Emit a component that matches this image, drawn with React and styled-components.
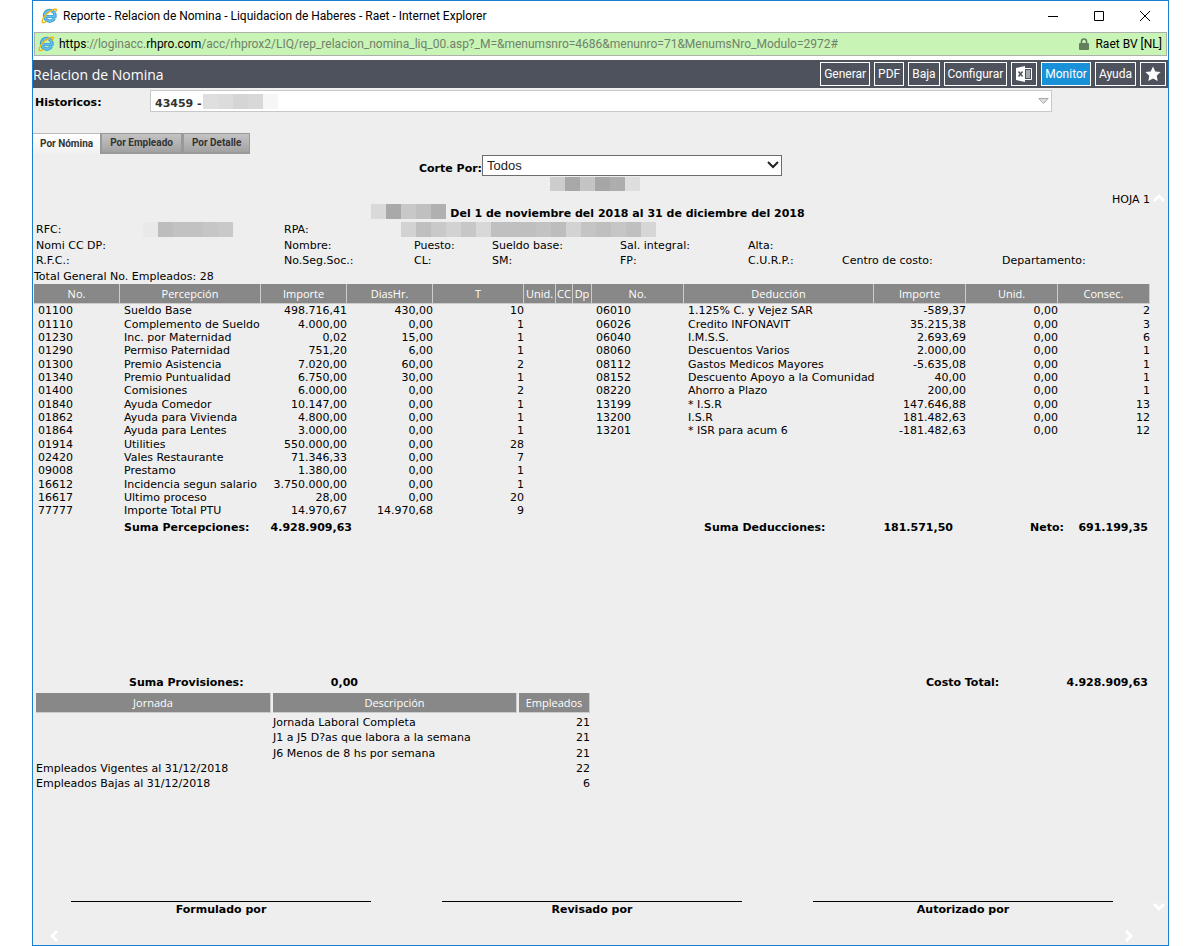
import styled, { createGlobalStyle } from 'styled-components'

const GlobalStyle = createGlobalStyle`
    * {
        box-sizing: border-box;
    }

    body {
        margin: 0;
        background-color: #fff;
        color: #000;
        font-family: 'DejaVu Sans', Verdana, sans-serif;
        font-size: 11px;
    }
`;

const uiFont = `'Open Sans', 'Noto Sans', sans-serif`;
const chromeFont = `Roboto, 'Open Sans', sans-serif`;

const Window = styled.div`
    display: flex;
    flex-direction: column;
    min-height: 100vh;
    margin: 0 31px 0 32px;
    border: 1px solid #1a7fd0;
    background-color: #eee;
`;

const TitleBar = styled.div`
    display: flex;
    align-items: center;
    gap: 5px;
    height: 31px;
    padding: 0 17px 2px 8px;
    background-color: #fff;
    font-family: ${chromeFont};
    font-size: 12px;
`;

const WindowTitle = styled.span`
    flex: 1;
`;

const WindowButtons = styled.div`
    display: flex;
    gap: 34px;
`;

const WindowButton = styled.button`
    display: flex;
    width: 12px;
    height: 12px;
    padding: 0;
    border: none;
    background: none;
`;

const AddressArea = styled.div`
    padding: 0 1px 4px;
    background-color: #fff;
`;

const AddressBar = styled.div`
    display: flex;
    align-items: center;
    gap: 4px;
    height: 24px;
    padding: 0 4px 0 3px;
    border: 1px solid #adb0ab;
    background-color: #c8f4b6;
    font-family: ${chromeFont};
    font-size: 12px;
`;

const Url = styled.span`
    flex: 1;
    color: #71816b;

    b {
        color: #000;
        font-weight: normal;
    }
`;

const Owner = styled.span`
    margin-left: 2px;
`;

const PageHeader = styled.header`
    display: flex;
    align-items: center;
    justify-content: space-between;
    height: 28px;
    padding-right: 2px;
    background-color: #4e525d;
    color: #fff;
`;

const PageTitle = styled.h1`
    margin: 0;
    font-family: ${uiFont};
    font-size: 14px;
    font-weight: normal;
`;

const Toolbar = styled.div`
    display: flex;
    gap: 4px;
`;

const ToolButton = styled.button`
    display: flex;
    align-items: center;
    justify-content: center;
    min-width: 26px;
    height: 24px;
    padding: 0 3px;
    border: 1px solid #fff;
    background-color: ${props => props.$active ? '#1991d8' : '#4e525d'};
    color: #fff;
    font-family: ${chromeFont};
    font-size: 12px;
`;

const HistoryRow = styled.div`
    display: flex;
    align-items: center;
    padding: 2px 116px 0 2px;
    font-weight: bold;

    label {
        width: 115px;
        padding-top: 3px;
    }
`;

const HistoryBox = styled.div`
    position: relative;
    flex: 1;
    height: 22px;

    select {
        width: 100%;
        height: 22px;
        padding: 4px 4px 0;
        border: 1px solid #c8c8c8;
        border-radius: 0;
        appearance: none;
        background-color: #fff;
        color: #333;
        font: bold 11px 'DejaVu Sans', Verdana, sans-serif;
    }

    svg {
        position: absolute;
        top: 8px;
        right: 3px;
    }
`;

const HistoryMask = styled.div`
    position: absolute;
    top: 4px;
    left: 53px;
`;

const MosaicRow = styled.span`
    display: inline-flex;
    height: ${props => props.$height || 15}px;
    vertical-align: top;
`;

const MosaicCell = styled.span`
    width: 15px;
    background-color: ${props => props.$color};
`;

const Tabs = styled.div`
    display: flex;
    margin-top: 21px;
`;

const Tab = styled.button`
    height: 21px;
    padding: 0 8px 2px;
    border: 1px solid #999;
    border-left-width: 2px;
    border-bottom-width: 2px;
    background: linear-gradient(#c4c4c4, #a2a2a2);
    color: #333;
    font-family: ${chromeFont};
    font-size: 10px;
    font-weight: bold;

    ${props => props.$active && `
        padding: 0 7px 2px;
        border: none;
        border-top: 1px solid #bbb;
        background: linear-gradient(#fff, #f0f0f0);
    `}
`;

const CutRow = styled.div`
    display: flex;
    align-items: center;
    justify-content: center;
    margin-top: 1px;

    label {
        padding-top: 5px;
        font-weight: bold;
    }
`;

const CutSelectBox = styled.div`
    position: relative;

    select {
        display: block;
        width: 300px;
        height: 21px;
        padding: 0 4px;
        border: 1px solid #6d6d6d;
        border-radius: 0;
        appearance: none;
        background-color: #fff;
        color: #222;
        font: 13px 'Liberation Sans', Arial, sans-serif;
    }

    svg {
        position: absolute;
        top: 5px;
        right: 3px;
    }
`;

const ReportArea = styled.div`
    display: grid;
    flex: 1;
    grid-template-columns: 1fr 18px;
    grid-template-rows: 1fr 27px;
    margin-top: 1px;
`;

const Report = styled.main`
    display: flex;
    flex-direction: column;
    padding-left: 1px;
`;

const ReportCenter = styled.div`
    height: 15px;
    padding-left: 5px;
    text-align: center;
`;

const Sheet = styled.div`
    height: 12px;
    line-height: 16px;
    text-align: right;
`;

const Period = styled.div`
    display: flex;
    align-items: flex-start;
    justify-content: center;
    gap: 4px;
    height: 15px;
    margin-bottom: 2px;
    padding-right: 8px;
    font-weight: bold;
    line-height: 15px;

    strong {
        padding-top: 2px;
    }
`;

const Info = styled.div`
    display: grid;
    grid-template-columns: 248fr 130fr 78fr 128fr 128fr 94fr 160fr 148fr;
    grid-template-rows: 16px 16px 15px;
    align-items: center;
    padding-left: 2px;
`;

const InfoField = styled.span`
    grid-column: ${props => props.$column};
    grid-row: ${props => props.$row};
    white-space: nowrap;
`;

const RfcField = styled(InfoField)`
    display: flex;
    align-items: center;
    gap: 82px;
`;

const RpaField = styled(InfoField)`
    display: flex;
    align-items: center;
    gap: 92px;
`;

const Total = styled.div`
    height: 16px;
    line-height: 18px;
`;

const Table = styled.table`
    width: 100%;
    border-spacing: 0;
    table-layout: fixed;

    th {
        height: 20px;
        padding: 0;
        border-right: 1px solid #ccc;
        border-bottom: 1px solid #ccc;
        background-color: #888;
        color: #fff;
        font-family: ${uiFont};
        font-size: 11px;
        font-weight: normal;
        line-height: 18px;
    }

    td {
        height: 13px;
        padding: 0;
        line-height: 13px;
        white-space: nowrap;
    }

    tr:nth-child(3n + 2) td {
        height: 14px;
    }
`;

const TextCell = styled.td`
    && {
        padding-left: 4px;
    }
`;

const NumberCell = styled.td`
    text-align: right;
`;

const Sums = styled.div`
    display: grid;
    grid-template-columns: 90fr 136fr 92fr 352fr 164fr 85fr 77fr 36fr 82fr;
    height: 21px;
    padding-right: 2px;
    font-weight: bold;
    line-height: 22px;
    white-space: nowrap;
`;

const SumLabel = styled.span`
    grid-column: ${props => props.$column};
`;

const SumValue = styled.span`
    grid-column: ${props => props.$column};
    text-align: right;
`;

const Costs = styled.div`
    display: grid;
    grid-template-columns: 95fr 229fr 568fr 222fr;
    height: 20px;
    margin-top: 135px;
    padding-right: 2px;
    font-weight: bold;
    line-height: 20px;
`;

const CostItem = styled.span`
    display: flex;
    justify-content: space-between;
`;

const ShiftTable = styled.table`
    width: 50%;
    border-spacing: 2px 0;
    table-layout: fixed;

    th {
        height: 20px;
        padding: 0;
        border-right: 1px solid #ccc;
        border-bottom: 1px solid #ccc;
        background-color: #888;
        color: #fff;
        font-family: ${uiFont};
        font-size: 11px;
        font-weight: normal;
        line-height: 18px;
    }

    td {
        height: 15px;
        padding: 0;
        line-height: 15px;
        white-space: nowrap;
    }

    tbody tr:first-child td {
        height: 17px;
        padding-top: 2px;
    }

    tbody tr:nth-child(3) td {
        height: 16px;
    }
`;

const Signatures = styled.div`
    display: flex;
    justify-content: center;
    gap: 71px;
    margin-top: auto;
`;

const Signature = styled.div`
    width: 300px;
    border-top: 1px solid #000;
    font-weight: bold;
    line-height: 16px;
    text-align: center;
`;

const VerticalScroll = styled.div`
    display: flex;
    flex-direction: column;
    align-items: center;
    justify-content: space-between;
    padding: 14px 0 4px;
`;

const HorizontalScroll = styled.div`
    display: flex;
    align-items: center;
    justify-content: space-between;
    padding: 9px 14px 0;
`;

const ScrollButton = styled.button`
    display: flex;
    align-items: center;
    justify-content: center;
    width: 14px;
    height: 14px;
    padding: 0;
    border: none;
    background: none;
`;

const perceptionCols = [86, 141, 86, 86, 91, 32, 17, 19, 92, 190, 92, 92, 92];

const headings = ['No.', 'Percepción', 'Importe', 'DiasHr.', 'T', 'Unid.', 'CC', 'Dp', 'No.', 'Deducción', 'Importe', 'Unid.', 'Consec.'];

const perceptions = [
    ['01100', 'Sueldo Base', '498.716,41', '430,00', '10'],
    ['01110', 'Complemento de Sueldo', '4.000,00', '0,00', '1'],
    ['01230', 'Inc. por Maternidad', '0,02', '15,00', '1'],
    ['01290', 'Permiso Paternidad', '751,20', '6,00', '1'],
    ['01300', 'Premio Asistencia', '7.020,00', '60,00', '2'],
    ['01340', 'Premio Puntualidad', '6.750,00', '30,00', '1'],
    ['01400', 'Comisiones', '6.000,00', '0,00', '2'],
    ['01840', 'Ayuda Comedor', '10.147,00', '0,00', '1'],
    ['01862', 'Ayuda para Vivienda', '4.800,00', '0,00', '1'],
    ['01864', 'Ayuda para Lentes', '3.000,00', '0,00', '1'],
    ['01914', 'Utilities', '550.000,00', '0,00', '28'],
    ['02420', 'Vales Restaurante', '71.346,33', '0,00', '7'],
    ['09008', 'Prestamo', '1.380,00', '0,00', '1'],
    ['16612', 'Incidencia segun salario', '3.750.000,00', '0,00', '1'],
    ['16617', 'Ultimo proceso', '28,00', '0,00', '20'],
    ['77777', 'Importe Total PTU', '14.970,67', '14.970,68', '9'],
];

const deductions = [
    ['06010', '1.125% C. y Vejez SAR', '-589,37', '0,00', '2'],
    ['06026', 'Credito INFONAVIT', '35.215,38', '0,00', '3'],
    ['06040', 'I.M.S.S.', '2.693,69', '0,00', '6'],
    ['08060', 'Descuentos Varios', '2.000,00', '0,00', '1'],
    ['08112', 'Gastos Medicos Mayores', '-5.635,08', '0,00', '1'],
    ['08152', 'Descuento Apoyo a la Comunidad', '40,00', '0,00', '1'],
    ['08220', 'Ahorro a Plazo', '200,00', '0,00', '1'],
    ['13199', '* I.S.R', '147.646,88', '0,00', '13'],
    ['13200', 'I.S.R', '181.482,63', '0,00', '12'],
    ['13201', '* ISR para acum 6', '-181.482,63', '0,00', '12'],
];

const infoFields = [
    [1, 2, 'Nomi CC DP:'],
    [2, 2, 'Nombre:'],
    [3, 2, 'Puesto:'],
    [4, 2, 'Sueldo base:'],
    [5, 2, 'Sal. integral:'],
    [6, 2, 'Alta:'],
    [1, 3, 'R.F.C.:'],
    [2, 3, 'No.Seg.Soc.:'],
    [3, 3, 'CL:'],
    [4, 3, 'SM:'],
    [5, 3, 'FP:'],
    [6, 3, 'C.U.R.P.:'],
    [7, 3, 'Centro de costo:'],
    [8, 3, 'Departamento:'],
];

const shifts = [
    ['', 'Jornada Laboral Completa', '21'],
    ['', 'J1 a J5 D?as que labora a la semana', '21'],
    ['', 'J6 Menos de 8 hs por semana', '21'],
    ['Empleados Vigentes al 31/12/2018', '', '22'],
    ['Empleados Bajas al 31/12/2018', '', '6'],
];

function Mosaic({colors, height}) {
    return (
        <MosaicRow $height={height}>
            {colors.map((color, i) => <MosaicCell key={i} $color={color} />)}
        </MosaicRow>
    );
}

function BrowserLogo() {
    return (
        <svg width="17" height="16" viewBox="0 0 17 16" aria-hidden="true">
            <path d="M13.400 10.300A5.300 5.300 0 1 1 14 8.500H4.800" fill="none" stroke="#2d8fc9" strokeWidth="3.200" />
            <path d="M13.400 10.300A5.300 5.300 0 1 1 14 8.500H4.800" fill="none" stroke="#62c3ee" strokeWidth="1.800" />
            <path d="M14.300 4.200c1.300-2 1.400-3.300.3-3.300C11.500.8 6 4.800 3 9.200c-2.100 3.200-2.400 5.600-.700 5.500.8 0 1.700-.4 2.700-1" fill="none" stroke="#f2b916" strokeWidth="1.500" strokeLinecap="round" />
        </svg>
    );
}

function Chevron({direction}) {
    const paths = {
        up: 'M2 10 7 5l5 5',
        down: 'M2 4l5 5 5-5',
        left: 'M10 2 5 7l5 5',
        right: 'M4 2l5 5-5 5',
    };

    return (
        <svg width="14" height="14" viewBox="0 0 14 14" aria-hidden="true">
            <path d={paths[direction]} fill="none" stroke="#fff" strokeWidth="3" />
        </svg>
    );
}

function App() {
    return (
        <Window>
            <GlobalStyle />
            <TitleBar>
                <BrowserLogo />
                <WindowTitle>Reporte - Relacion de Nomina - Liquidacion de Haberes - Raet - Internet Explorer</WindowTitle>
                <WindowButtons>
                    <WindowButton aria-label="Minimizar">
                        <svg width="12" height="12"><path d="M1 6.500h10" stroke="#000" /></svg>
                    </WindowButton>
                    <WindowButton aria-label="Maximizar">
                        <svg width="12" height="12"><path d="M1.500 1.500h9v9h-9z" fill="none" stroke="#000" /></svg>
                    </WindowButton>
                    <WindowButton aria-label="Cerrar">
                        <svg width="12" height="12"><path d="M1 1l10 10M11 1 1 11" stroke="#000" /></svg>
                    </WindowButton>
                </WindowButtons>
            </TitleBar>
            <AddressArea>
                <AddressBar>
                    <BrowserLogo />
                    <Url><b>https</b>://loginacc.<b>rhpro.com</b>/acc/rhprox2/LIQ/rep_relacion_nomina_liq_00.asp?_M=&amp;menumsnro=4686&amp;menunro=71&amp;MenumsNro_Modulo=2972#</Url>
                    <svg width="10" height="12" viewBox="0 0 10 12" aria-hidden="true">
                        <path d="M2.500 6V3.500a2.500 2.500 0 0 1 5 0V6" fill="none" stroke="#647f5b" strokeWidth="1.600" />
                        <rect y="5" width="10" height="7" rx="1" fill="#647f5b" />
                    </svg>
                    <Owner>Raet BV [NL]</Owner>
                </AddressBar>
            </AddressArea>
            <PageHeader>
                <PageTitle>Relacion de Nomina</PageTitle>
                <Toolbar>
                    <ToolButton>Generar</ToolButton>
                    <ToolButton>PDF</ToolButton>
                    <ToolButton>Baja</ToolButton>
                    <ToolButton>Configurar</ToolButton>
                    <ToolButton aria-label="Excel">
                        <svg width="16" height="16" viewBox="0 0 16 16">
                            <path d="M0 2 9 0v16l-9-2z" fill="#fff" />
                            <path d="M2.500 5.500l4 5M6.500 5.500l-4 5" stroke="#4e525d" strokeWidth="1.500" />
                            <path d="M9 2.500h6.500v11H9" fill="none" stroke="#fff" />
                            <path d="M10 5h4M10 7h4M10 9h4M10 11h4" stroke="#fff" />
                        </svg>
                    </ToolButton>
                    <ToolButton $active>Monitor</ToolButton>
                    <ToolButton>Ayuda</ToolButton>
                    <ToolButton aria-label="Favoritos">
                        <svg width="16" height="16" viewBox="0 0 16 16">
                            <path d="M8 .5l2.300 4.900 5.300.700-3.900 3.700 1 5.300L8 12.500l-4.700 2.600 1-5.300L.4 6.100l5.300-.7z" fill="#fff" />
                        </svg>
                    </ToolButton>
                </Toolbar>
            </PageHeader>
            <HistoryRow>
                <label htmlFor="historicos">Historicos:</label>
                <HistoryBox>
                    <select id="historicos">
                        <option>43459 -</option>
                    </select>
                    <HistoryMask>
                        <Mosaic colors={['#dfdfdf', '#dcdcdc', '#d5d5d5', '#d8d8d8', '#f6f6f6']} />
                    </HistoryMask>
                    <svg width="11" height="7" viewBox="0 0 11 7" aria-hidden="true">
                        <path d="M.8.500h9.400L5.500 5.500z" fill="#ddd" stroke="#aaa" />
                    </svg>
                </HistoryBox>
            </HistoryRow>
            <Tabs>
                <Tab $active>Por Nómina</Tab>
                <Tab>Por Empleado</Tab>
                <Tab>Por Detalle</Tab>
            </Tabs>
            <CutRow>
                <label htmlFor="corte">Corte Por:</label>
                <CutSelectBox>
                    <select id="corte">
                        <option>Todos</option>
                    </select>
                    <svg width="12" height="10" viewBox="0 0 12 10" aria-hidden="true">
                        <path d="M1 2l5 5 5-5" fill="none" stroke="#222" strokeWidth="2" />
                    </svg>
                </CutSelectBox>
            </CutRow>
            <ReportArea>
                <Report>
                    <ReportCenter>
                        <Mosaic height={14} colors={['#cdcdcd', '#a8a8a8', '#c4c4c4', '#a6a6a6', '#adadad', '#dedede']} />
                    </ReportCenter>
                    <Sheet>HOJA 1</Sheet>
                    <Period>
                        <Mosaic colors={['#d9d9d9', '#a9a9a9', '#c8c8c8', '#c0c0c0', '#b0b0b0']} />
                        <strong>Del 1 de noviembre del 2018 al 31 de diciembre del 2018</strong>
                    </Period>
                    <Info>
                        <RfcField $column="1" $row="1">
                            RFC:
                            <Mosaic colors={['#e9e9e9', '#bdbdbd', '#c2c2c2', '#c2c2c2', '#c6c6c6', '#c9c9c9']} />
                        </RfcField>
                        <RpaField $column="2 / 9" $row="1">
                            RPA:
                            <Mosaic colors={['#d2d2d2', '#bfbfbf', '#c9c9c9', '#d2d2d2', '#c7c7c7', '#d8d8d8', '#c0c0c0', '#c0c0c0', '#bfbfbf', '#c3c3c3', '#bdbdbd', '#d3d3d3', '#c4c4c4', '#bfbfbf', '#c6c6c6', '#c0c0c0', '#d6d6d6']} />
                        </RpaField>
                        {infoFields.map(([column, row, text]) => (
                            <InfoField key={text} $column={column} $row={row}>{text}</InfoField>
                        ))}
                    </Info>
                    <Total>Total General No. Empleados: 28</Total>
                    <Table>
                        <colgroup>
                            {perceptionCols.map((width, i) => <col key={i} width={width} />)}
                        </colgroup>
                        <thead>
                            <tr>
                                {headings.map((text, i) => <th key={i}>{text}</th>)}
                            </tr>
                        </thead>
                        <tbody>
                            {perceptions.map((row, i) => {
                                const deduction = deductions[i] || ['', '', '', '', ''];
                                return (
                                    <tr key={row[0]}>
                                        <TextCell>{row[0]}</TextCell>
                                        <TextCell>{row[1]}</TextCell>
                                        <NumberCell>{row[2]}</NumberCell>
                                        <NumberCell>{row[3]}</NumberCell>
                                        <NumberCell>{row[4]}</NumberCell>
                                        <td />
                                        <td />
                                        <td />
                                        <TextCell>{deduction[0]}</TextCell>
                                        <TextCell>{deduction[1]}</TextCell>
                                        <NumberCell>{deduction[2]}</NumberCell>
                                        <NumberCell>{deduction[3]}</NumberCell>
                                        <NumberCell>{deduction[4]}</NumberCell>
                                    </tr>
                                );
                            })}
                        </tbody>
                    </Table>
                    <Sums>
                        <SumLabel $column="2">Suma Percepciones:</SumLabel>
                        <SumValue $column="3">4.928.909,63</SumValue>
                        <SumLabel $column="5">Suma Deducciones:</SumLabel>
                        <SumValue $column="6">181.571,50</SumValue>
                        <SumLabel $column="8">Neto:</SumLabel>
                        <SumValue $column="9">691.199,35</SumValue>
                    </Sums>
                    <Costs>
                        <span />
                        <CostItem>
                            <span>Suma Provisiones:</span>
                            <span>0,00</span>
                        </CostItem>
                        <span />
                        <CostItem>
                            <span>Costo Total:</span>
                            <span>4.928.909,63</span>
                        </CostItem>
                    </Costs>
                    <ShiftTable>
                        <colgroup>
                            <col width="235" />
                            <col width="244" />
                            <col width="71" />
                        </colgroup>
                        <thead>
                            <tr>
                                <th>Jornada</th>
                                <th>Descripción</th>
                                <th>Empleados</th>
                            </tr>
                        </thead>
                        <tbody>
                            {shifts.map(([shift, description, count], i) => (
                                <tr key={i}>
                                    <td>{shift}</td>
                                    <td>{description}</td>
                                    <NumberCell>{count}</NumberCell>
                                </tr>
                            ))}
                        </tbody>
                    </ShiftTable>
                    <Signatures>
                        <Signature>Formulado por</Signature>
                        <Signature>Revisado por</Signature>
                        <Signature>Autorizado por</Signature>
                    </Signatures>
                </Report>
                <VerticalScroll>
                    <ScrollButton aria-label="Subir"><Chevron direction="up" /></ScrollButton>
                    <ScrollButton aria-label="Bajar"><Chevron direction="down" /></ScrollButton>
                </VerticalScroll>
                <HorizontalScroll>
                    <ScrollButton aria-label="Izquierda"><Chevron direction="left" /></ScrollButton>
                    <ScrollButton aria-label="Derecha"><Chevron direction="right" /></ScrollButton>
                </HorizontalScroll>
            </ReportArea>
        </Window>
    );
}

export default App;
